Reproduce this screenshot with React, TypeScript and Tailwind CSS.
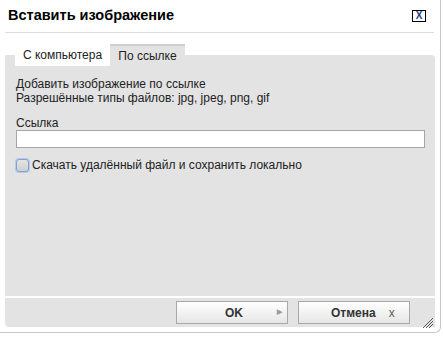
import React from 'react';

export default function App() {
  return (
    <div className="w-[443px] h-[339px] bg-white overflow-hidden font-['Liberation_Sans',Arial,sans-serif] text-[#222]">
      {/* Dialog frame */}
      <div className="relative w-[442px] h-[333px] -ml-[1px] bg-white border-r border-b border-[#c8c8c8] rounded-br-[6px] flex flex-col">
        {/* Header */}
        <div className="h-[32px] flex items-center justify-between pl-[9px] pr-[14px]">
          <span className="text-[14.5px] font-bold text-black">Вставить изображение</span>
          <button className="w-[14px] h-[12px] border border-black flex items-center justify-center text-[10px] font-bold leading-none text-[#1e3a8a]">
            X
          </button>
        </div>
        <div className="mx-[6px] h-px bg-[#dcdcdc]" />

        {/* Tabs */}
        <div className="mt-[11px] pl-[16px] flex h-[22px] relative z-10">
          <div className="w-[95px] bg-white flex items-center justify-center text-[12px] text-[#222]">
            С компьютера
          </div>
          <div className="w-[75px] bg-[#e3e3e3] border-t-2 border-[#cfcfcf] flex items-center justify-center text-[12px] text-[#222]">
            По ссылке
          </div>
        </div>

        {/* Panel */}
        <div className="-mt-[11px] ml-[6px] mr-[5px] h-[241px] bg-[#e3e3e3] rounded-tr-[4px] px-[11px] pt-[22px] text-[12px] leading-[14px]">
          <div>Добавить изображение по ссылке</div>
          <div>Разрешённые типы файлов: jpg, jpeg, png, gif</div>
          <div className="mt-[11px]">Ссылка</div>
          <input
            type="text"
            className="block w-[409px] h-[18px] bg-white border border-[#a6a6a6] outline-none"
          />
          <label className="mt-[10px] flex items-center gap-[3px]">
            <span className="w-[13px] h-[13px] rounded-[3px] border border-[#7f9fd6] bg-gradient-to-b from-[#e4e4e4] to-[#cfcfcf] shadow-[0_0_0_1px_#b7c9ea]" />
            <span>Скачать удалённый файл и сохранить локально</span>
          </label>
        </div>

        <div className="h-[2px]" />

        {/* Footer */}
        <div className="ml-[6px] mr-[5px] h-[29px] bg-[#e3e3e3] rounded-bl-[4px] flex items-center justify-end gap-[10px] pr-[25px] relative">
          <button className="w-[112px] h-[23px] border border-[#a8a8a8] bg-gradient-to-b from-white to-[#e6e6e6] flex items-center text-[12px] font-bold text-[#333]">
            <span className="ml-[48px]">OK</span>
            <span className="ml-[34px] text-[7px] text-[#999]">▶</span>
          </button>
          <button className="w-[112px] h-[23px] border border-[#a8a8a8] bg-gradient-to-b from-white to-[#e6e6e6] flex items-center text-[12px] font-bold text-[#333]">
            <span className="ml-[32px]">Отмена</span>
            <span className="ml-[13px] text-[12px] font-normal text-[#6b5a4a]">x</span>
          </button>
          {/* resize grip */}
          <svg className="absolute right-[1px] bottom-[-2px]" width="12" height="12" viewBox="0 0 12 12">
            <path d="M11 1 L1 11 M11 4 L4 11 M11 7 L7 11" stroke="#555" strokeWidth="1" />
          </svg>
        </div>
      </div>
    </div>
  );
}
